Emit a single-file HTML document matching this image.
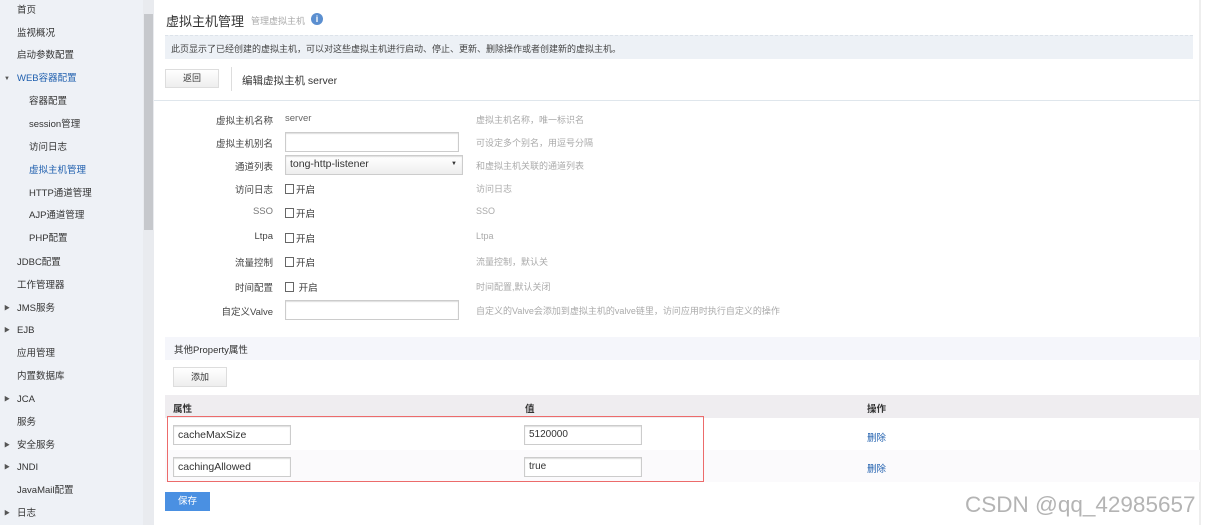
<!DOCTYPE html>
<html><head><meta charset="utf-8"><style>
*{margin:0;padding:0;box-sizing:border-box}
body{width:1205px;height:525px;overflow:hidden;background:#fff;font-family:"Liberation Sans","Noto Sans CJK SC",sans-serif;position:relative;color:#333}
.a{position:absolute;white-space:nowrap}
#side{position:absolute;left:0;top:0;width:143px;height:525px;background:#eef1f6}
#sb{position:absolute;left:143px;top:0;width:11px;height:525px;background:#e9ebef}
#sb div{position:absolute;left:1px;top:14px;width:9px;height:216px;background:#c6c8cc}
.s{font-size:9.5px;color:#333;line-height:12px}
.sb{color:#1f5fae}
.tri{font-size:6px;color:#555;line-height:12px}
.lbl{font-size:9.5px;color:#444;text-align:right;width:120px;left:153px}
.hint{font-size:9px;color:#aaa;left:476px}
.inp{position:absolute;border:1px solid #ccc;background:#fff;height:20px;box-shadow:inset 0 1px 1px #ddd;font-size:10px;padding:3px 4px;color:#333}
.cb{font-size:9.5px;color:#333}
.cb i{display:inline-block;width:9px;height:10px;border:1px solid #666;vertical-align:-1px;margin-right:2px}
</style></head><body>
<div id="side"></div>
<div id="sb"><div></div></div>
<div class="a s" style="left:17px;top:5px">首页</div>
<div class="a s" style="left:17px;top:28px">监视概况</div>
<div class="a s" style="left:17px;top:50px">启动参数配置</div>
<div class="a tri" style="left:4px;top:73px">▼</div>
<div class="a s sb" style="left:17px;top:73px">WEB容器配置</div>
<div class="a s" style="left:29px;top:96px">容器配置</div>
<div class="a s" style="left:29px;top:119px">session管理</div>
<div class="a s" style="left:29px;top:142px">访问日志</div>
<div class="a s sb" style="left:29px;top:165px">虚拟主机管理</div>
<div class="a s" style="left:29px;top:188px">HTTP通道管理</div>
<div class="a s" style="left:29px;top:210px">AJP通道管理</div>
<div class="a s" style="left:29px;top:233px">PHP配置</div>
<div class="a s" style="left:17px;top:257px">JDBC配置</div>
<div class="a s" style="left:17px;top:280px">工作管理器</div>
<div class="a tri" style="left:4px;top:303px">▶</div><div class="a s" style="left:17px;top:303px">JMS服务</div>
<div class="a tri" style="left:4px;top:325px">▶</div><div class="a s" style="left:17px;top:325px">EJB</div>
<div class="a s" style="left:17px;top:348px">应用管理</div>
<div class="a s" style="left:17px;top:371px">内置数据库</div>
<div class="a tri" style="left:4px;top:394px">▶</div><div class="a s" style="left:17px;top:394px">JCA</div>
<div class="a s" style="left:17px;top:417px">服务</div>
<div class="a tri" style="left:4px;top:440px">▶</div><div class="a s" style="left:17px;top:440px">安全服务</div>
<div class="a tri" style="left:4px;top:462px">▶</div><div class="a s" style="left:17px;top:462px">JNDI</div>
<div class="a s" style="left:17px;top:485px">JavaMail配置</div>
<div class="a tri" style="left:4px;top:508px">▶</div><div class="a s" style="left:17px;top:508px">日志</div>

<div class="a" style="left:1199px;top:0;width:2px;height:525px;background:#eee"></div>
<div class="a" style="left:166px;top:11px;font-size:13px;color:#333">虚拟主机管理</div>
<div class="a" style="left:251px;top:14px;font-size:9px;color:#aaa">管理虚拟主机</div>
<div class="a" style="left:311px;top:13px;width:12px;height:12px;border-radius:50%;background:#5b8fd0;color:#fff;font-size:9px;text-align:center;line-height:12px;font-weight:bold">i</div>
<div class="a" style="left:165px;top:35px;width:1028px;height:24px;background:#edf1f6;border-top:1px dashed #dde3ea"></div>
<div class="a" style="left:171px;top:42px;font-size:9px;color:#444">此页显示了已经创建的虚拟主机，可以对这些虚拟主机进行启动、停止、更新、删除操作或者创建新的虚拟主机。</div>
<div class="a" style="left:165px;top:69px;width:54px;height:19px;border:1px solid #ddd;background:linear-gradient(#fff,#eee);font-size:9px;text-align:center;line-height:17px">返回</div>
<div class="a" style="left:231px;top:67px;width:1px;height:24px;background:#ddd"></div>
<div class="a" style="left:242px;top:73px;font-size:10.5px;color:#333">编辑虚拟主机 server</div>
<div class="a" style="left:154px;top:100px;width:1046px;height:1px;background:#dfe6ec"></div>

<div class="a lbl" style="top:113px">虚拟主机名称</div><div class="a" style="left:285px;top:113px;font-size:9.5px;color:#666">server</div><div class="a hint" style="top:113px">虚拟主机名称，唯一标识名</div>
<div class="a lbl" style="top:136px">虚拟主机别名</div><div class="inp" style="left:285px;top:132px;width:174px"></div><div class="a hint" style="top:136px">可设定多个别名，用逗号分隔</div>
<div class="a lbl" style="top:159px">通道列表</div><div class="inp" style="left:285px;top:155px;width:178px;background:linear-gradient(#fff,#eee);font-size:10.5px;padding-top:2px">tong-http-listener<span style="position:absolute;right:5px;top:5px;font-size:6px">▼</span></div><div class="a hint" style="top:159px">和虚拟主机关联的通道列表</div>
<div class="a lbl" style="top:182px">访问日志</div><div class="a cb" style="left:285px;top:182px"><i></i>开启</div><div class="a hint" style="top:182px">访问日志</div>
<div class="a lbl" style="top:206px;color:#777">SSO</div><div class="a cb" style="left:285px;top:206px"><i></i>开启</div><div class="a hint" style="top:206px">SSO</div>
<div class="a lbl" style="top:231px">Ltpa</div><div class="a cb" style="left:285px;top:231px"><i></i>开启</div><div class="a hint" style="top:231px">Ltpa</div>
<div class="a lbl" style="top:255px">流量控制</div><div class="a cb" style="left:285px;top:255px"><i></i>开启</div><div class="a hint" style="top:255px">流量控制，默认关</div>
<div class="a lbl" style="top:280px">时间配置</div><div class="a cb" style="left:285px;top:280px"><i></i> 开启</div><div class="a hint" style="top:280px">时间配置,默认关闭</div>
<div class="a lbl" style="top:304px">自定义Valve</div><div class="inp" style="left:285px;top:300px;width:174px"></div><div class="a hint" style="top:304px">自定义的Valve会添加到虚拟主机的valve链里，访问应用时执行自定义的操作</div>

<div class="a" style="left:165px;top:337px;width:1035px;height:23px;background:#f5f6fb"></div>
<div class="a" style="left:174px;top:342px;font-size:9.5px;color:#333">其他Property属性</div>
<div class="a" style="left:173px;top:367px;width:54px;height:20px;border:1px solid #ddd;background:linear-gradient(#fff,#eee);font-size:9px;text-align:center;line-height:18px">添加</div>
<div class="a" style="left:165px;top:395px;width:1035px;height:23px;background:#efedf0"></div>
<div class="a" style="left:173px;top:401px;font-size:9.5px;font-weight:bold">属性</div>
<div class="a" style="left:525px;top:401px;font-size:9.5px;font-weight:bold">值</div>
<div class="a" style="left:867px;top:401px;font-size:9.5px;font-weight:bold">操作</div>
<div class="a" style="left:165px;top:450px;width:1035px;height:32px;background:#fbfafc"></div>
<div class="a" style="left:167px;top:416px;width:537px;height:66px;border:1px solid #ec6b6b"></div>
<div class="inp" style="left:173px;top:425px;width:118px;font-size:10.5px">cacheMaxSize</div>
<div class="inp" style="left:524px;top:425px;width:118px">5120000</div>
<div class="a" style="left:867px;top:430px;font-size:9.5px;color:#1f5fae">删除</div>
<div class="inp" style="left:173px;top:457px;width:118px;font-size:10.5px">cachingAllowed</div>
<div class="inp" style="left:524px;top:457px;width:118px">true</div>
<div class="a" style="left:867px;top:461px;font-size:9.5px;color:#1f5fae">删除</div>
<div class="a" style="left:165px;top:492px;width:45px;height:19px;background:#4a90e2;color:#fff;font-size:9.5px;text-align:center;line-height:19px">保存</div>
<div class="a" style="left:965px;top:492px;font-size:22.5px;color:#b4b4b4">CSDN @qq_42985657</div>
</body></html>
